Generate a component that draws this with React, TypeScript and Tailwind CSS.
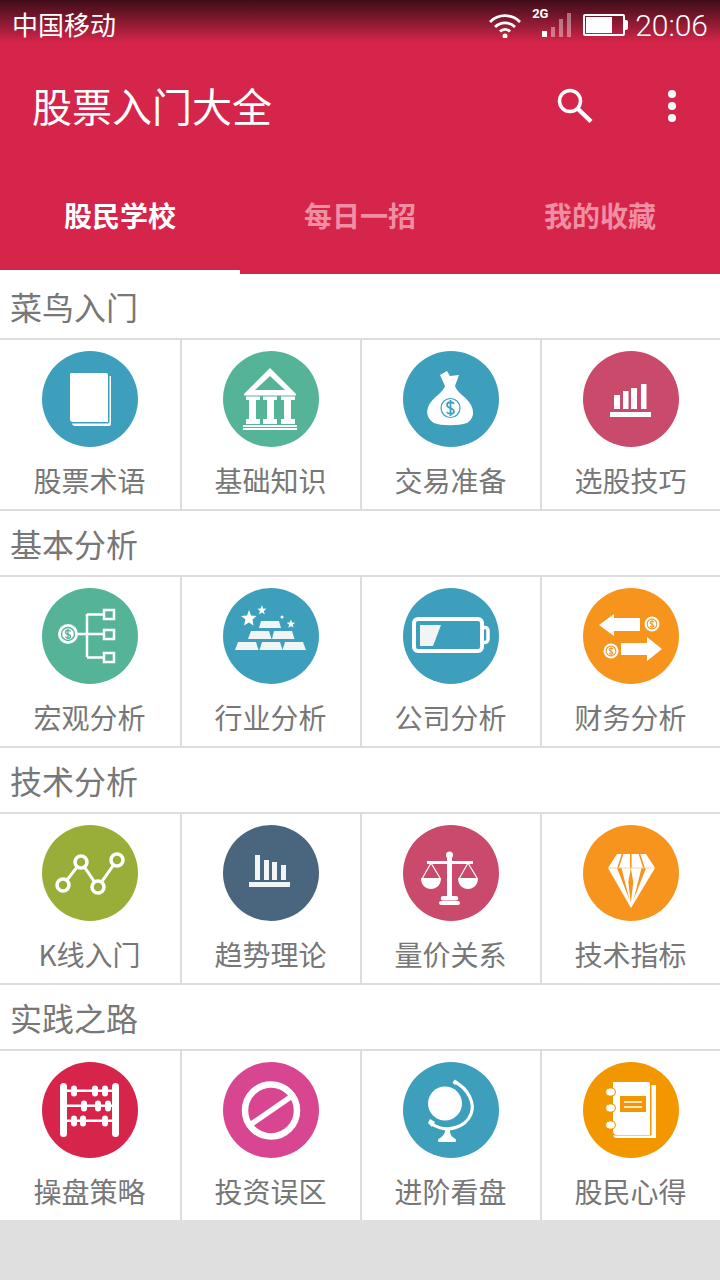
import React from "react";

const W = "#ffffff";

function Circle({ fill, children }: { fill: string; children?: React.ReactNode }) {
  return (
    <svg width="96" height="96" viewBox="0 0 96 96" className="block">
      <circle cx="48" cy="48" r="48" fill={fill} />
      {children}
    </svg>
  );
}

const Coin = ({ cx, cy, r, bg }: { cx: number; cy: number; r: number; bg: string }) => (
  <g>
    <circle cx={cx} cy={cy} r={r} fill={W} />
    <circle cx={cx} cy={cy} r={r * 0.72} fill={bg} />
    <circle cx={cx} cy={cy} r={r * 0.58} fill={W} />
    <path
      d={`M${cx + r * 0.25} ${cy - r * 0.25}c-${r * 0.1} -${r * 0.2} -${r * 0.5} -${r * 0.15} -${r * 0.5} ${r * 0.08}c0 ${r * 0.3} ${r * 0.55} ${r * 0.15} ${r * 0.5} ${r * 0.42}c0 ${r * 0.2} -${r * 0.4} ${r * 0.25} -${r * 0.5} 0M${cx} ${cy - r * 0.5}V${cy + r * 0.5}`}
      fill="none"
      stroke={bg}
      strokeWidth={r * 0.14}
    />
  </g>
);

const icons: Record<string, React.ReactNode> = {
  book: (
    <Circle fill="#3d9fbc">
      <path d="M29 22h35a2 2 0 0 1 2 2v47H31a3 3 0 0 1-3-3V23a1 1 0 0 1 1-1z" fill={W} />
      <path d="M67.500 25H69v48a2 2 0 0 1-2 2H33a3 3 0 0 1-3-2.500h35.500a2 2 0 0 0 2-2z" fill={W} />
    </Circle>
  ),
  temple: (
    <Circle fill="#55b497">
      <path d="M47 17L73 43v1.500H21V43z" fill={W} />
      <path d="M47 25L32 39H62z" fill="#55b497" />
      <path d="M23 45.500h14V49h-4v19h4v5H23v-5h3V49h-3zM40 45.500h14V49h-3v19h3v5H40v-5h4V49h-4zM58 45.500h14V49h-4v19h4v5H58v-5h3V49h-3z" fill={W} />
      <path d="M20 74h54v2H20zM20 77h54v2H20z" fill={W} />
    </Circle>
  ),
  bag: (
    <Circle fill="#3d9fbc">
      <path d="M37 24l7-4 3 5 9-1-4 11H42z" fill={W} />
      <path d="M42 35H52C54 42 64 46 68 54C72 62 70 68 64 72C55 75 38 75 31 72C25 68 22 62 26 54C30 46 40 42 42 35z" fill={W} />
      <ellipse cx="47.500" cy="57" rx="9.500" ry="9.500" fill="none" stroke="#3d9fbc" strokeWidth="1.200" />
      <path d="M51 53c-1-2.500-7-2.500-7 1 0 4 7 2.500 7 6.500 0 3-6 3-7 .5M47.500 49v16" fill="none" stroke="#3d9fbc" strokeWidth="1.800" />
    </Circle>
  ),
  bars: (
    <Circle fill="#c94a6a">
      <path d="M31 44h6v14h-6zM40 40h5.500v18H40zM48 37h6v21h-6zM58 33h5.500v25H58zM27 61h41v5H27z" fill={W} />
    </Circle>
  ),
  tree: (
    <Circle fill="#55b497">
      <Coin cx={26} cy={46} r={10} bg="#55b497" />
      <path d="M36 46h25M45 26v43M45 26.500h16M45 69.500h16" fill="none" stroke={W} strokeWidth="2.500" />
      <rect x="62" y="22" width="10" height="9" fill="#55b497" stroke={W} strokeWidth="2.500" />
      <rect x="62" y="42" width="10" height="9" fill="#55b497" stroke={W} strokeWidth="2.500" />
      <rect x="62" y="65" width="10" height="9" fill="#55b497" stroke={W} strokeWidth="2.500" />
    </Circle>
  ),
  gold: (
    <Circle fill="#3d9fbc">
      <path d="M38 33h18l2 7H36zM28 43h18l2.500 8H25zM51 43h18l2.500 8H49zM15 54h18l2.500 8H12zM39 54h18l2.500 8H36.500zM62 54h18l3 8H59.500z" fill="#f2f5f6" />
      <path d="M26 22l2 5.500 5.500.5-4 3.500 1 6-4.500-3-5 3 1.500-6-4.500-3.500 6-.5z" fill={W} />
      <path d="M39 17l1 3.500 3.500.3-2.700 2.200 1 3.500-2.800-2-3 2 1-3.500-2.500-2.200 3.200-.3z" fill={W} />
      <path d="M68 31.500l1 3 3.200.2-2.500 2 .8 3-2.500-1.700-2.700 1.700.9-3-2.500-2 3-.2z" fill={W} />
      <circle cx="59" cy="29" r="1.500" fill={W} />
    </Circle>
  ),
  battery: (
    <Circle fill="#3d9fbc">
      <rect x="11" y="31" width="68" height="32" rx="4" fill="none" stroke={W} strokeWidth="4" />
      <path d="M79 39.500h3a3 3 0 0 1 3 3v9a3 3 0 0 1-3 3h-3" fill="none" stroke={W} strokeWidth="3.500" />
      <path d="M17 37h21l-8 21H17z" fill="#f2f5f6" />
    </Circle>
  ),
  arrows: (
    <Circle fill="#f7941e">
      <path d="M16 37L31 26v4h26v13H31v5z" fill={W} />
      <path d="M79 61L64 49v6H38v12h26v6z" fill={W} />
      <Coin cx={69} cy={36} r={7.500} bg="#f7941e" />
      <Coin cx={28} cy={63} r={7.500} bg="#f7941e" />
    </Circle>
  ),
  chart: (
    <Circle fill="#99ae38">
      <path d="M21 60L39 37 56 62 75 35" fill="none" stroke={W} strokeWidth="3" />
      {[[21, 60], [39, 37], [56, 62], [75, 35]].map(([x, y]) => (
        <circle key={x} cx={x} cy={y} r="6" fill="#99ae38" stroke={W} strokeWidth="3.500" />
      ))}
    </Circle>
  ),
  bars2: (
    <Circle fill="#4a667e">
      <path d="M32 30h5v25h-5zM41 35h5v20h-5zM49 37h5v18h-5zM58 40h5v15h-5zM26 57h41v5H26z" fill="#f2f5f6" />
    </Circle>
  ),
  scale: (
    <Circle fill="#c94a6a">
      <path d="M24 36h46v3H24z" fill={W} />
      <circle cx="46.500" cy="30" r="3.500" fill={W} />
      <path d="M44 33h5v38h-5z" fill={W} />
      <path d="M40 71h13a2 2 0 0 1 0 4.500H40a2 2 0 0 1 0-4.500zM38 76h17a2 2 0 0 1 0 4H38a2 2 0 0 1 0-4z" fill={W} />
      <path d="M28 38L19.500 53M28 38L37 53M65 38L56.500 53M65 38L74 53" fill="none" stroke={W} strokeWidth="1.200" />
      <path d="M18 53h20c0 7-4.500 11-10 11S18 60 18 53zM55 53h20c0 7-4.500 11-10 11S55 60 55 53z" fill={W} />
    </Circle>
  ),
  diamond: (
    <Circle fill="#f7941e">
      <path d="M34 29h29l9 14-24 40-23-40z" fill={W} />
      <path d="M39.500 29L35 43M56.500 29L61 43M47.800 29V43" fill="none" stroke="#f7941e" strokeWidth="1.600" />
      <path d="M34 43h4.500l8 32zM63 43h-4.500l-8 32zM47.800 43l2.500 14-2.500 21-2.500-21z" fill="#f7941e" />
      <path d="M25 43H72" stroke="#fbc487" strokeWidth="0.800" />
    </Circle>
  ),
  abacus: (
    <Circle fill="#d6244a">
      <rect x="18" y="21" width="7" height="54" rx="3.500" fill={W} />
      <rect x="70" y="21" width="7" height="54" rx="3.500" fill={W} />
      <path d="M24 27.500h47v2.500H24zM24 42.500h47V45H24zM24 57.500h47V60H24z" fill={W} />
      {[[32, 29], [53, 29], [63, 29], [42, 44], [56, 44], [66, 44], [32, 59], [41, 59], [63, 59]].map(([x, y]) => (
        <rect key={`${x}-${y}`} x={x - 3} y={y - 5.5} width="6" height="11" rx="3" fill={W} />
      ))}
    </Circle>
  ),
  no: (
    <Circle fill="#d84590">
      <circle cx="48" cy="48.500" r="26" fill="none" stroke={W} strokeWidth="6.500" />
      <path d="M27 63L69 34" stroke={W} strokeWidth="5.500" />
    </Circle>
  ),
  globe: (
    <Circle fill="#3d9fbc">
      <circle cx="42" cy="41.500" r="17" fill={W} />
      <path d="M52 20C66 27 72 42 68 52C63 65 44 72 29 62" fill="none" stroke={W} strokeWidth="3.200" />
      <path d="M52 17.500l3 2.500-3 3-2.500-2.500zM27 57l5 3-3 5-4-4z" fill={W} />
      <path d="M42 68h5c0 4 1 6 5.500 9 1 1 .5 3-.5 3H36c-1 0-1.500-2-.5-3 4.500-3 6.500-5 6.500-9z" fill={W} />
    </Circle>
  ),
  note: (
    <Circle fill="#f39700">
      <path d="M30 20h35a2 2 0 0 1 2 2v51H34a4 4 0 0 1-4-4z" fill={W} />
      <path d="M68.500 23H73v53H34a4 4 0 0 1-4-2.500h38.500z" fill={W} />
      <rect x="37" y="34" width="26" height="16" fill="#f39700" />
      <path d="M41 40h18M41 45h18" stroke={W} strokeWidth="1.500" />
      {[30, 46, 63].map((y) => (
        <rect key={y} x="22.500" y={y - 4} width="10" height="8" rx="4" fill={W} stroke="#f39700" strokeWidth="1" />
      ))}
    </Circle>
  ),
};

const sections = [
  { title: "菜鸟入门", items: [["股票术语", "book"], ["基础知识", "temple"], ["交易准备", "bag"], ["选股技巧", "bars"]] },
  { title: "基本分析", items: [["宏观分析", "tree"], ["行业分析", "gold"], ["公司分析", "battery"], ["财务分析", "arrows"]] },
  { title: "技术分析", items: [["K线入门", "chart"], ["趋势理论", "bars2"], ["量价关系", "scale"], ["技术指标", "diamond"]] },
  { title: "实践之路", items: [["操盘策略", "abacus"], ["投资误区", "no"], ["进阶看盘", "globe"], ["股民心得", "note"]] },
];

export default function App() {
  return (
    <div className="w-[720px] h-[1280px] overflow-hidden bg-[#dfdfdf] font-['Noto_Sans_CJK_SC','Noto_Sans',sans-serif] flex flex-col">
      <header className="bg-[#d6254a] text-white">
        <div className="h-[50px] bg-linear-to-b from-[#3f0c18] to-[#d6254a] to-85% flex items-center justify-between pl-[12px] pr-[12px]">
          <span className="text-[26px] leading-[50px] -translate-y-px">中国移动</span>
          <div className="flex items-center">
            <svg width="34" height="26" viewBox="0 0 34 26" className="mr-[10px]">
              <path d="M2 10a21 21 0 0 1 30 0M7 15a14 14 0 0 1 20 0M12 19.500a7 7 0 0 1 10 0" fill="none" stroke="#fff" strokeWidth="2.800" />
              <circle cx="17" cy="24" r="2.500" fill="#fff" />
            </svg>
            <div className="relative w-[39px] h-[36px] mr-[12px]">
              <span className="absolute top-0 left-0 text-[13px] leading-[14px] font-bold font-['Roboto',sans-serif]">2G</span>
              <div className="absolute left-[10px] bottom-[6px] flex items-end gap-[4px]">
                <div className="w-[5px] h-[6px] bg-white" />
                <div className="w-[4px] h-[10px] bg-white/40" />
                <div className="w-[4px] h-[18px] bg-white/40" />
                <div className="w-[4px] h-[24px] bg-white/40" />
              </div>
            </div>
            <div className="flex items-center mr-[7px]">
              <div className="w-[42px] h-[22px] border-2 border-white rounded-[2px] p-[1px]">
                <div className="w-[26px] h-full bg-white" />
              </div>
              <div className="w-[3px] h-[10px] bg-white rounded-r-[2px]" />
            </div>
            <span className="text-[30px] leading-[50px] translate-y-px font-['Roboto',sans-serif] font-light">20:06</span>
          </div>
        </div>
        <div className="h-[112px] flex items-center justify-between pl-[32px] pr-[44px]">
          <h1 className="text-[40px] leading-[56px] font-normal mb-[3px]">股票入门大全</h1>
          <div className="flex items-center">
            <svg width="36" height="36" viewBox="0 0 36 36" className="mr-[75px]">
              <circle cx="13" cy="13" r="10.500" fill="none" stroke="#fff" strokeWidth="3.500" />
              <path d="M21 21L34 33.500" stroke="#fff" strokeWidth="4.500" />
            </svg>
            <div className="flex flex-col gap-[4px]">
              <div className="w-[8px] h-[8px] rounded-full bg-white" />
              <div className="w-[8px] h-[8px] rounded-full bg-white" />
              <div className="w-[8px] h-[8px] rounded-full bg-white" />
            </div>
          </div>
        </div>
        <nav className="h-[112px] grid grid-cols-3 text-[28px] font-bold text-center">
          <div className="border-b-4 border-white leading-[106px] text-white">股民学校</div>
          <div className="leading-[106px] text-[#ef8fa4]">每日一招</div>
          <div className="leading-[106px] text-[#ef8fa4]">我的收藏</div>
        </nav>
      </header>
      <main>
        {sections.map((s, si) => (
          <section key={s.title} className="bg-white">
            <h2 className="h-[66px] pl-[10px] text-[32px] leading-[64px] font-normal text-[#777] border-b-2 border-[#ddd]">{s.title}</h2>
            <div className={si === 3 ? "grid grid-cols-4 h-[169px]" : "grid grid-cols-4 h-[171px] border-b-2 border-[#ddd]"}>
              {s.items.map(([label, icon], i) => (
                <div key={label} className={i === 0 ? "flex flex-col items-center pt-[11px]" : "flex flex-col items-center pt-[11px] border-l-2 border-[#ddd]"}>
                  {icons[icon]}
                  <span className="mt-[13px] pr-[1px] text-[28px] leading-[40px] text-[#777]">{label}</span>
                </div>
              ))}
            </div>
          </section>
        ))}
      </main>
    </div>
  );
}
